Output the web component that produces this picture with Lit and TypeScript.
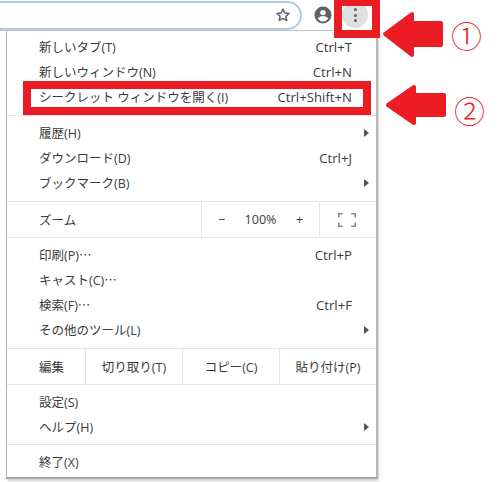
import { LitElement, html, css, svg } from "lit";
import { customElement } from "lit/decorators.js";

type Item = { label: string; key?: string; sub?: boolean; dots?: boolean };

@customElement("app-root")
export class AppRoot extends LitElement {
  static styles = css`
    :host {
      display: block;
      position: relative;
      width: 500px;
      height: 482px;
      overflow: hidden;
      background: #fff;
      font-family: "Open Sans", "Noto Sans CJK JP", sans-serif;
      font-size: 12.5px;
      color: #3a3a3a;
    }
    .toolbar {
      width: 378px;
      height: 31px;
      box-sizing: border-box;
      border-bottom: 1px solid #c6c6c6;
      display: flex;
      align-items: center;
      position: relative;
    }
    .omnibox {
      width: 322px;
      height: 29px;
      box-sizing: border-box;
      margin-left: -20px;
      border: 2px solid #a9cdea;
      border-radius: 0 15px 15px 0;
      display: flex;
      align-items: center;
      justify-content: flex-end;
      padding-right: 9px;
      flex: none;
    }
    .avatar {
      margin-left: 12px;
      flex: none;
      display: block;
    }
    .more {
      margin-left: 10px;
      width: 26px;
      height: 26px;
      border-radius: 50%;
      background: #e0e0e0;
      display: flex;
      flex-direction: column;
      align-items: center;
      justify-content: center;
      gap: 2.5px;
      flex: none;
    }
    .more i {
      width: 3px;
      height: 3px;
      border-radius: 50%;
      background: #636363;
      display: block;
    }
    .menu {
      margin-left: 6px;
      width: 372px;
      height: 448px;
      box-sizing: border-box;
      background: #fff;
      border-left: 1px solid #b4b4b4;
      border-right: 2px solid #b9b9b9;
      border-bottom: 2px solid #a8a8a8;
      box-shadow: 1px 2px 2px rgba(0, 0, 0, 0.18);
    }
    .section {
      padding: 5px 0;
      border-bottom: 1px solid #e6e6e6;
    }
    .section.first {
      padding-top: 4px;
    }
    .section.tight {
      padding-bottom: 4px;
    }
    .section.last {
      border-bottom: none;
      padding-top: 5px;
    }
    .row {
      height: 25px;
      box-sizing: border-box;
      padding-bottom: 2px;
      display: flex;
      align-items: center;
      padding-left: 32px;
      position: relative;
    }
    .ell {
      font-family: "Noto Sans CJK JP", sans-serif;
    }
    .key {
      position: absolute;
      right: 24px;
      font-size: 13.2px;
    }
    .tri {
      position: absolute;
      right: 7px;
      width: 0;
      height: 0;
      border-left: 5px solid #555;
      border-top: 4px solid transparent;
      border-bottom: 4px solid transparent;
    }
    .band {
      display: flex;
      border-bottom: 1px solid #e6e6e6;
      height: 35px;
    }
    .band .lbl {
      display: flex;
      align-items: center;
      padding-left: 32px;
      padding-bottom: 1px;
      box-sizing: border-box;
    }
    .zoom .lbl {
      width: 194px;
    }
    .zoom .ctrl {
      width: 119px;
      box-sizing: border-box;
      border-left: 1px solid #e6e6e6;
      border-right: 1px solid #e6e6e6;
      display: flex;
      align-items: center;
    }
    .zoom .ctrl span {
      text-align: center;
    }
    .zoom .ctrl .btn {
      width: 39px;
    }
    .zoom .ctrl .pct {
      width: 39px;
      white-space: nowrap;
    }
    .zoom .full {
      flex: 1;
      display: flex;
      align-items: center;
      justify-content: center;
      padding-right: 2px;
    }
    .edit .lbl {
      width: 78px;
    }
    .edit .cell {
      width: 97px;
      box-sizing: border-box;
      border-left: 1px solid #e6e6e6;
      padding-bottom: 1px;
      display: flex;
      align-items: center;
      justify-content: center;
      flex: none;
    }
    .overlay {
      position: absolute;
      box-sizing: border-box;
      border: 8px solid #ec1c24;
    }
    .ov1 {
      left: 334px;
      top: -2px;
      width: 46px;
      height: 40px;
    }
    .ov2 {
      left: 23px;
      top: 81px;
      width: 348px;
      height: 34px;
    }
    .arrow {
      position: absolute;
      left: 380px;
      top: 8px;
      display: block;
    }
    .num {
      position: absolute;
      font-family: "Noto Sans CJK JP", sans-serif;
      font-size: 31px;
      line-height: 32px;
      color: #e4262c;
      font-weight: 300;
    }
    .n1 {
      left: 451px;
      top: 19px;
    }
    .n2 {
      left: 454px;
      top: 94px;
    }
  `;

  private row(i: Item) {
    return html`<div class="row">
      <span>${i.label}${i.dots ? html`<span class="ell">…</span>` : null}</span>
      ${i.key ? html`<span class="key">${i.key}</span>` : null}
      ${i.sub ? html`<span class="tri"></span>` : null}
    </div>`;
  }

  render() {
    return html`
      <div class="toolbar">
        <div class="omnibox">
          <svg width="16" height="16" viewBox="0 0 24 24" fill="none" stroke="#5f6368" stroke-width="2.2" stroke-linejoin="round">
            <path d="M12 3.2l2.7 5.9 6.4.7-4.8 4.3 1.4 6.3L12 17l-5.7 3.2 1.4-6.3-4.8-4.3 6.4-.7z" />
          </svg>
        </div>
        <svg class="avatar" width="18" height="18" viewBox="0 0 18 18">
          <circle cx="9" cy="9" r="8.5" fill="#5f6368" />
          <circle cx="9" cy="6.6" r="2.7" fill="#fff" />
          <path d="M3.6 12.6c1-1.9 3.4-2.7 5.4-2.7s4.400.8 5.400 2.700A6.700 6.700 0 0 1 9 15.400a6.700 6.700 0 0 1-5.400-2.800z" fill="#fff" />
        </svg>
        <div class="more"><i></i><i></i><i></i></div>
      </div>

      <div class="menu">
        <div class="section first">
          ${[
            { label: "新しいタブ(T)", key: "Ctrl+T" },
            { label: "新しいウィンドウ(N)", key: "Ctrl+N" },
            { label: "シークレット ウィンドウを開く(I)", key: "Ctrl+Shift+N" },
          ].map((i) => this.row(i))}
        </div>
        <div class="section">
          ${[
            { label: "履歴(H)", sub: true },
            { label: "ダウンロード(D)", key: "Ctrl+J" },
            { label: "ブックマーク(B)", sub: true },
          ].map((i) => this.row(i))}
        </div>
        <div class="band zoom">
          <div class="lbl">ズーム</div>
          <div class="ctrl">
            <span class="btn">−</span><span class="pct">100%</span><span class="btn">+</span>
          </div>
          <div class="full">
            <svg width="18" height="14" viewBox="0 0 18 14" fill="none" stroke="#8a8a8a" stroke-width="1.6">
              ${svg`<path d="M.8 4.500V.8h4M13.200.8h4v3.700M17.200 9.500v3.700h-4M4.800 13.200h-4V9.500" />`}
            </svg>
          </div>
        </div>
        <div class="section">
          ${[
            { label: "印刷(P)", dots: true, key: "Ctrl+P" },
            { label: "キャスト(C)", dots: true },
            { label: "検索(F)", dots: true, key: "Ctrl+F" },
            { label: "その他のツール(L)", sub: true },
          ].map((i) => this.row(i))}
        </div>
        <div class="band edit">
          <div class="lbl">編集</div>
          <div class="cell">切り取り(T)</div>
          <div class="cell">コピー(C)</div>
          <div class="cell">貼り付け(P)</div>
        </div>
        <div class="section tight">
          ${[{ label: "設定(S)" }, { label: "ヘルプ(H)", sub: true }].map((i) => this.row(i))}
        </div>
        <div class="section last">${this.row({ label: "終了(X)" })}</div>
      </div>

      <div class="overlay ov1"></div>
      <div class="overlay ov2"></div>
      <svg class="arrow" width="70" height="120" viewBox="380 8 70 120">
        <g fill="#ec1c24" stroke="#ec1c24" stroke-width="4" stroke-linejoin="round">
          <path d="M385 34L412 14V23H441V45H412V55z" />
          <path d="M388 105L414 87V95H444V115H414V123z" />
        </g>
      </svg>
      <span class="num n1">①</span>
      <span class="num n2">②</span>
    `;
  }
}
